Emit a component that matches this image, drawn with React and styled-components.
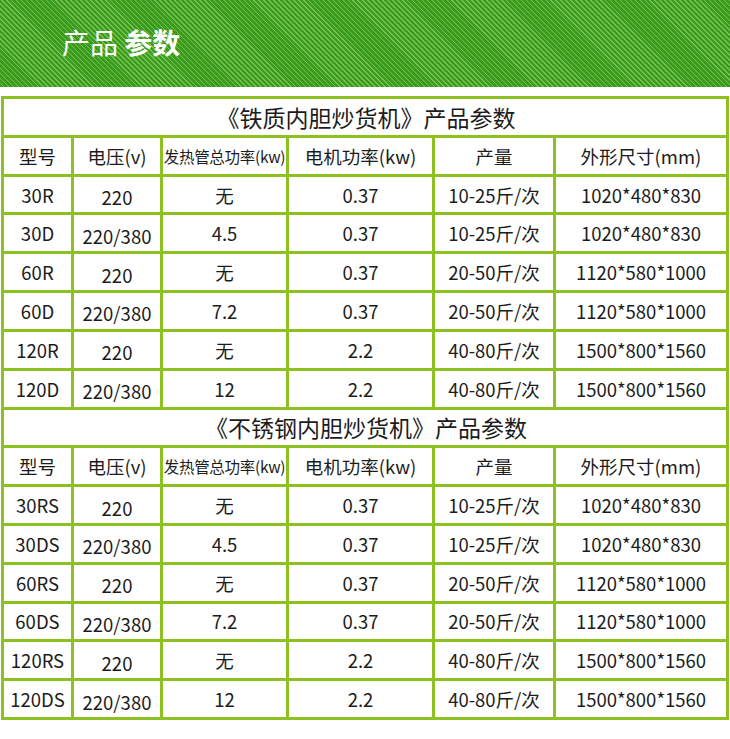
import React from "react";
import styled, { createGlobalStyle } from "styled-components";

const GlobalStyle = createGlobalStyle`
  html, body {
    margin: 0;
    padding: 0;
    background: #ffffff;
  }
  body {
    font-family: "Noto Sans CJK SC", "Noto Sans", sans-serif;
  }
`;

const LINE = "#8cc11f";

const headers = ["型号", "电压(v)", "发热管总功率(kw)", "电机功率(kw)", "产量", "外形尺寸(mm)"];

const sections = [
  {
    title: "《铁质内胆炒货机》产品参数",
    rows: [
      ["30R", "220", "无", "0.37", "10-25斤/次", "1020*480*830"],
      ["30D", "220/380", "4.5", "0.37", "10-25斤/次", "1020*480*830"],
      ["60R", "220", "无", "0.37", "20-50斤/次", "1120*580*1000"],
      ["60D", "220/380", "7.2", "0.37", "20-50斤/次", "1120*580*1000"],
      ["120R", "220", "无", "2.2", "40-80斤/次", "1500*800*1560"],
      ["120D", "220/380", "12", "2.2", "40-80斤/次", "1500*800*1560"],
    ],
  },
  {
    title: "《不锈钢内胆炒货机》产品参数",
    rows: [
      ["30RS", "220", "无", "0.37", "10-25斤/次", "1020*480*830"],
      ["30DS", "220/380", "4.5", "0.37", "10-25斤/次", "1020*480*830"],
      ["60RS", "220", "无", "0.37", "20-50斤/次", "1120*580*1000"],
      ["60DS", "220/380", "7.2", "0.37", "20-50斤/次", "1120*580*1000"],
      ["120RS", "220", "无", "2.2", "40-80斤/次", "1500*800*1560"],
      ["120DS", "220/380", "12", "2.2", "40-80斤/次", "1500*800*1560"],
    ],
  },
];

function App() {
  return (
    <>
      <GlobalStyle />
      <Page>
        <Banner>
          <BannerTitle>
            产品 <strong>参数</strong>
          </BannerTitle>
        </Banner>
        <Table>
          {sections.map((section) => (
            <React.Fragment key={section.title}>
              <TitleCell>{section.title}</TitleCell>
              {headers.map((h, i) => (
                <HeadCell key={h} $small={i === 2}>
                  {h}
                </HeadCell>
              ))}
              {section.rows.map((row) =>
                row.map((value, i) => (
                  <Cell key={row[0] + i} $drop={i === 1}>
                    {value}
                  </Cell>
                ))
              )}
            </React.Fragment>
          ))}
        </Table>
      </Page>
    </>
  );
}

export default App;

const Page = styled.div`
  width: 730px;
  display: flex;
  flex-direction: column;
`;

const Banner = styled.div`
  height: 87px;
  display: flex;
  align-items: center;
  padding-left: 62px;
  background-color: #3a9b1e;
  background-image: repeating-linear-gradient(
    45deg,
    #3a9b1e 0px,
    #3a9b1e 2.4px,
    #74c24e 2.4px,
    #74c24e 3.5px
  );
`;

const BannerTitle = styled.h1`
  margin: 0 0 4px 0;
  color: #ffffff;
  font-size: 28px;
  font-weight: 400;
  line-height: 1;
  strong {
    font-weight: 700;
  }
`;

const Table = styled.div`
  box-sizing: border-box;
  margin: 9px 1px 0 1px;
  width: 728px;
  height: 624px;
  padding: 3px;
  background: ${LINE};
  display: grid;
  grid-template-columns: 67px 86px 123px 143px 118px 170px;
  grid-template-rows: repeat(16, 1fr);
  gap: 3px;
`;

const BaseCell = styled.div`
  background: #ffffff;
  display: flex;
  align-items: center;
  justify-content: center;
  color: #1c1c1c;
  white-space: nowrap;
  overflow: hidden;
`;

const TitleCell = styled(BaseCell)`
  grid-column: 1 / -1;
  font-size: 23px;
  padding-left: 2px;
`;

const HeadCell = styled(BaseCell)`
  font-size: ${(p) => (p.$small ? "15.5px" : "18.5px")};
  letter-spacing: ${(p) => (p.$small ? "-0.3px" : "0")};
`;

const Cell = styled(BaseCell)`
  font-size: 18.5px;
  padding-top: ${(p) => (p.$drop ? "5px" : "0")};
  box-sizing: border-box;
`;
